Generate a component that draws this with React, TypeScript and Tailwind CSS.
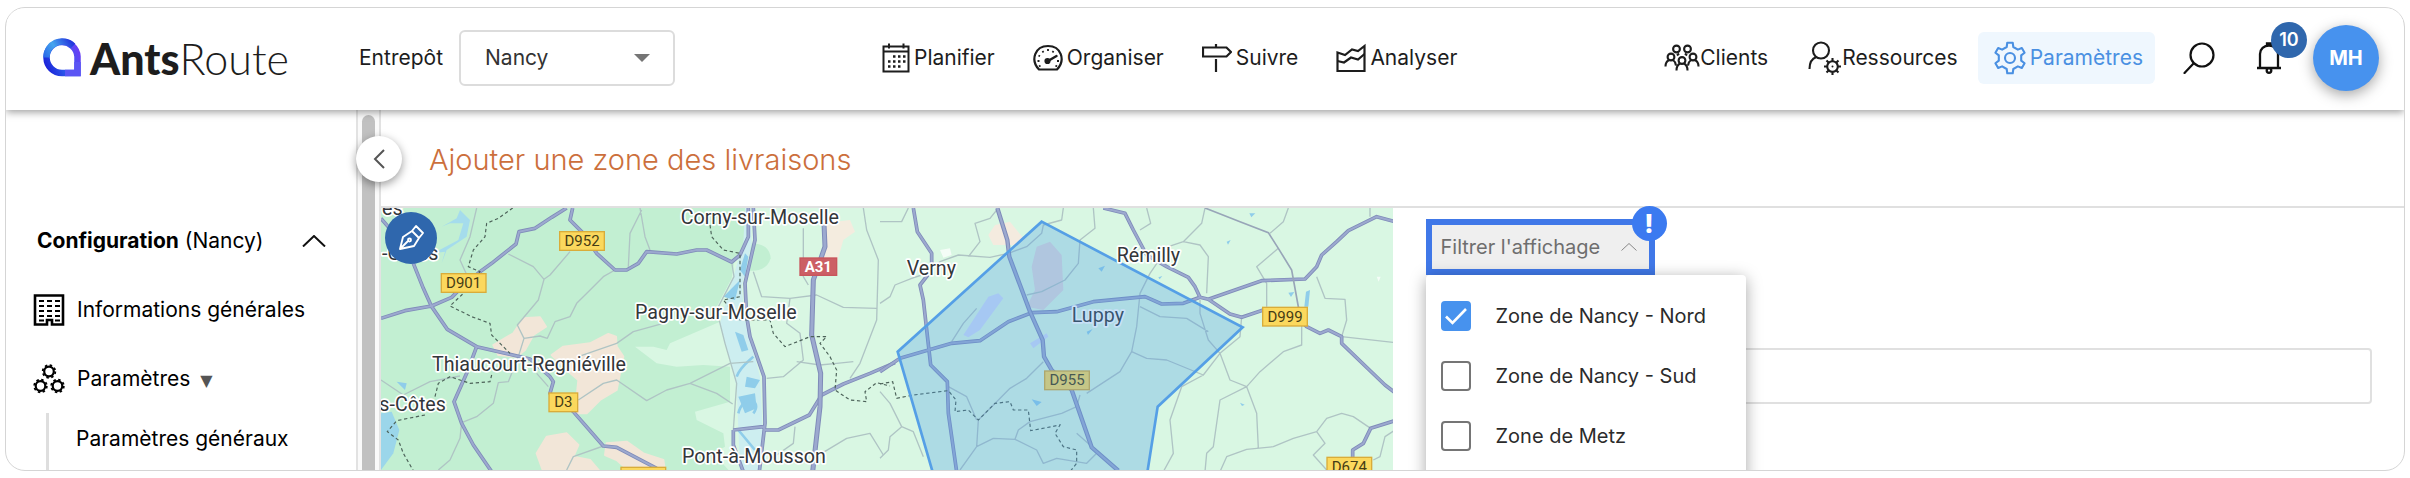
import type { ReactNode } from "react";

const gearPath = (cx: number, cy: number, outer: number, inner: number, teeth: number) => {
  const step = (Math.PI * 2) / teeth;
  const points: string[] = [];
  for (let i = 0; i < teeth; i++) {
    const a = i * step - Math.PI / 2;
    const corners = [
      [inner, -0.28],
      [outer, -0.17],
      [outer, 0.17],
      [inner, 0.28],
    ];
    corners.forEach(([r, o]) => {
      points.push(`${(cx + r * Math.cos(a + o * step)).toFixed(2)} ${(cy + r * Math.sin(a + o * step)).toFixed(2)}`);
    });
  }
  return `M${points.join("L")}Z`;
};

const Logo = () => (
  <svg className="size-10" viewBox="0 0 40 40" fill="none">
    <defs>
      <linearGradient id="logo-ring" x1="4" y1="30" x2="38" y2="14" gradientUnits="userSpaceOnUse">
        <stop offset="0" stopColor="#1b22d8" />
        <stop offset="0.5" stopColor="#2f63ee" />
        <stop offset="1" stopColor="#6a3df5" />
      </linearGradient>
      <linearGradient id="logo-top" x1="2" y1="18" x2="28" y2="2" gradientUnits="userSpaceOnUse">
        <stop offset="0" stopColor="#2a6be8" />
        <stop offset="0.45" stopColor="#45a5ee" />
        <stop offset="1" stopColor="#2338de" />
      </linearGradient>
    </defs>
    <path d="M20 35H35.500V18.500A15.500 15.500 0 1 0 20 35Z" stroke="url(#logo-ring)" strokeWidth="6.500" />
    <path d="M4.500 19.500A15.500 15.500 0 0 1 31 8" stroke="url(#logo-top)" strokeWidth="6.500" />
    <path d="M23 35H35.500V24" stroke="#5b55f4" strokeWidth="6.500" />
  </svg>
);

const CalendarIcon = () => (
  <svg className="h-[30px] w-7" viewBox="0 0 28 30" fill="none" stroke="#1d1d1d" strokeWidth="2">
    <path d="M1.500 3.500H26.500V28.500H1.500ZM1.500 8.500H26.500M7 0.500V5.500M21.500 0.500V5.500" />
    <path d="M11 13.500H24M6 18.500H24M6 23.500H19" strokeWidth="2.500" strokeDasharray="2.500 2.500" />
  </svg>
);

const GaugeIcon = () => (
  <svg className="h-7 w-[30px]" viewBox="0 0 30 28" fill="none" stroke="#1d1d1d" strokeWidth="2.200">
    <path d="M6 25.500C-3 16 2 2 15 2S33 16 24 25.500Z" strokeLinejoin="round" />
    <path d="M15 17L23.500 12" strokeWidth="2.400" strokeLinecap="round" />
    <circle cx="14.500" cy="17" r="2" fill="#1d1d1d" />
    <path d="M4.500 17H6.500M5.500 11.500L7 12.300M9.500 7L10.500 8.500M15 5V7M20.500 7L19.500 8.500M24 17H26M6 22.500L7.500 21.500M24 22.500L22.500 21.500" strokeWidth="1.800" />
  </svg>
);

const SignIcon = () => (
  <svg className="h-[30px] w-[30px]" viewBox="1 0 30 30" fill="none" stroke="#1d1d1d" strokeWidth="2.200">
    <path d="M2 4.500H25.500L30 9L25.500 13.500H2ZM15 1V4.500M15 16V29" />
  </svg>
);

const ChartIcon = () => (
  <svg className="h-[30px] w-[30px]" viewBox="0 0 30 30" fill="none" stroke="#1d1d1d" strokeWidth="2.200">
    <path d="M1.500 28H28.500V3L22 8L16 6.500L9 12L1.500 9.500Z" />
    <path d="M1.500 18L8 19.500L15 14.500L22 16.500L28.500 11" />
  </svg>
);

const ClientsIcon = () => (
  <svg className="h-7 w-9" viewBox="0 0 36 28" fill="none" stroke="#1d1d1d" strokeWidth="2.100">
    <circle cx="12.500" cy="5" r="3.400" />
    <circle cx="23.500" cy="5" r="3.400" />
    <circle cx="7" cy="13" r="3.400" />
    <circle cx="29" cy="13" r="3.400" />
    <circle cx="18" cy="16.500" r="3.400" />
    <path d="M1.500 22.500C1.500 19 3 17 5 16M12 21.500C11.500 18.500 10.500 17 9 16M34.500 22.500C34.500 19 33 17 31 16M24 21.500C24.500 18.500 25.500 17 27 16M12.500 26.500C12.500 23 14 20.500 16 19.500M23.500 26.500C23.500 23 22 20.500 20 19.500M13 11.500L15 9.500M23 11.500L21 9.500" />
  </svg>
);

const ResourcesIcon = () => (
  <svg className="h-[34px] w-[34px]" viewBox="0 0 34 34" fill="none" stroke="#1d1d1d" strokeWidth="2.100">
    <circle cx="13" cy="9.500" r="8" />
    <path d="M1.500 28C1.500 22 4 17.500 8.500 16" />
    <circle cx="24.500" cy="25.500" r="5.300" />
    <circle cx="24.500" cy="25.500" r="1" fill="#1d1d1d" stroke="none" />
    <path d="M24.500 20V17M24.500 31V34M19 25.500H16M30 25.500H33M20.600 21.600L18.500 19.500M28.400 21.600L30.500 19.500M20.600 29.400L18.500 31.500M28.400 29.400L30.500 31.500" />
  </svg>
);

const SettingsIcon = () => (
  <svg className="h-[34px] w-8" viewBox="0 0 32 34" fill="none" stroke="#4a90e2" strokeWidth="2.100" strokeLinejoin="round">
    <path d={gearPath(16, 17, 15.5, 11.5, 6)} />
    <circle cx="16" cy="17" r="5" />
  </svg>
);

const BuildingIcon = () => (
  <svg className="h-8 w-8" viewBox="0 0 32 32" fill="none" stroke="#000">
    <path d="M2 1.500H30V30.500H19V26H14V30.500H2Z" strokeWidth="2.600" />
    <path d="M6 7H27M6 12H27M6 17H27M6 22H27M6 26.500H11M22 26.500H27" strokeWidth="2.200" strokeDasharray="5 3" />
  </svg>
);

const GearsIcon = () => (
  <svg className="h-8 w-8" viewBox="0 0 32 32" fill="none" stroke="#000">
    {[
      [16, 8.5],
      [7.5, 23],
      [24.5, 23],
    ].map(([x, y]) => (
      <g key={x}>
        <circle cx={x} cy={y} r="4.800" strokeWidth="2.200" />
        <circle cx={x} cy={y} r="6.300" strokeWidth="1.800" strokeDasharray="2.470 2.470" />
      </g>
    ))}
  </svg>
);

const navItems = [
  { label: "Planifier", icon: <CalendarIcon /> },
  { label: "Organiser", icon: <GaugeIcon /> },
  { label: "Suivre", icon: <SignIcon /> },
  { label: "Analyser", icon: <ChartIcon /> },
];

const zones = [
  { id: "zone-nord", label: "Zone de Nancy - Nord", checked: true },
  { id: "zone-sud", label: "Zone de Nancy - Sud", checked: false },
  { id: "zone-metz", label: "Zone de Metz", checked: false },
];

const NavLink = ({ icon, children }: { icon: ReactNode; children: ReactNode }) => (
  <a href="#" className="flex items-center gap-1">
    {icon}
    {children}
  </a>
);

const Header = () => (
  <header className="relative z-20 flex h-[102px] shrink-0 items-center justify-between bg-white pr-[25px] pb-0.5 pl-9 text-[21px] text-[#1d1d1d] shadow-[0_2px_8px_rgba(0,0,0,0.4)]">
    <div className="flex items-center">
      <a href="#" className="flex items-center gap-2 font-[Lato,sans-serif] text-[43px] leading-none" aria-label="AntsRoute">
        <Logo />
        <span>
          <b className="font-black">Ants</b>
          <span className="font-light">Route</span>
        </span>
      </a>
      <label htmlFor="depot" className="mr-4 ml-[70px]">
        Entrepôt
      </label>
      <div className="relative">
        <select id="depot" className="h-14 w-[216px] appearance-none rounded-md border-2 border-[#dcdcdc] bg-white pl-6 text-[#333]">
          <option>Nancy</option>
        </select>
        <svg className="pointer-events-none absolute top-6 right-[25px] h-2 w-4" viewBox="0 0 16 8">
          <path d="M0 0H16L8 8Z" fill="#757575" />
        </svg>
      </div>
    </div>

    <nav className="flex items-center gap-[38px]">
      {navItems.map((item) => (
        <NavLink key={item.label} icon={item.icon}>
          {item.label}
        </NavLink>
      ))}
    </nav>

    <div className="flex items-center">
      <a href="#" className="flex items-center">
        <ClientsIcon />
        Clients
      </a>
      <a href="#" className="ml-10 flex items-center">
        <ResourcesIcon />
        Ressources
      </a>
      <a href="#" className="ml-5 flex h-[52px] items-center gap-1 rounded-md bg-[#eff7fe] pr-3 pl-4 text-[#4a90e2]">
        <SettingsIcon />
        Paramètres
      </a>
      <button type="button" aria-label="Rechercher" className="ml-7">
        <svg className="size-8" viewBox="0 0 32 32" fill="none" stroke="#111" strokeWidth="2.200" strokeLinecap="round">
          <circle cx="19" cy="13" r="11.500" />
          <path d="M10.500 21.500L1.500 31" />
        </svg>
      </button>
      <button type="button" aria-label="Notifications" className="relative ml-10">
        <svg className="h-8 w-7" viewBox="0 0 28 32" fill="none" stroke="#111" strokeWidth="2.300">
          <path d="M2 26H26M5 26V12C5 7 9 3.500 14 3.500S23 7 23 12V26M12 3.500V1.500H16V3.500" />
          <circle cx="14" cy="28.500" r="2.300" />
        </svg>
        <span className="absolute -top-[20px] left-4 flex size-9 items-center justify-center rounded-full bg-[#2f67ad] text-lg font-semibold text-white">10</span>
      </button>
      <button type="button" className="ml-[30px] size-[66px] rounded-full bg-[#4792ee] text-xl font-bold text-white shadow-[0_4px_14px_rgba(0,0,0,0.35)]">MH</button>
    </div>
  </header>
);

const Sidebar = () => (
  <aside className="relative z-10 flex w-[375px] shrink-0 text-[21px] text-black">
    <div className="flex flex-1 flex-col pt-24">
      <button type="button" className="flex h-[69px] items-center justify-between pr-[30px] pl-[31px]">
        <span>
          <b className="font-bold">Configuration</b> (Nancy)
        </span>
        <svg className="h-3 w-6" viewBox="0 0 24 12" fill="none" stroke="#111" strokeWidth="2">
          <path d="M1 11.500L12 1L23 11.500" />
        </svg>
      </button>
      <a href="#" className="flex h-[69px] items-center gap-3 pl-[27px]">
        <BuildingIcon />
        Informations générales
      </a>
      <a href="#" className="flex h-[69px] items-center gap-3 pl-[27px]">
        <GearsIcon />
        <span>
          Paramètres <span className="ml-1 font-['DejaVu_Sans'] text-base text-[#555]">▼</span>
        </span>
      </a>
      <ul className="ml-10 flex-1 border-l-[3px] border-[#dedede] pl-[27px]">
        <li className="flex h-[52px] items-center">
          <a href="#">Paramètres généraux</a>
        </li>
      </ul>
    </div>
    <div className="flex w-[25px] justify-center border-x-2 border-[#e2e2e2] bg-[#fafafa] pt-[5px]">
      <div className="w-[13px] rounded-t-full bg-[#c1c1c1]" />
    </div>
    <button type="button" aria-label="Réduire le menu" className="absolute top-[26px] -right-[21px] flex size-[46px] items-center justify-center rounded-full bg-white shadow-[0_3px_10px_rgba(0,0,0,0.4)]">
      <svg className="h-5 w-3" viewBox="0 0 12 20" fill="none" stroke="#555" strokeWidth="2">
        <path d="M11 1L2 10L11 19" />
      </svg>
    </button>
  </aside>
);

const westMajor = [
  "M33 355L105 332L185 318L245 292L262 275L330 215L365 190L438 132L447 95L495 85L545 52L590 24",
  "M130 190L160 265L185 320L232 388L320 440L480 477L540 530L550 545L540 580L610 635L700 738L740 742L860 805",
  "M320 440L290 520L252 605L275 670L310 735L365 815",
  "M608 24L600 60L640 100L680 160L735 210L770 210L805 190L830 155L920 162L980 150L1010 150L1085 186L1110 165L1135 110L1135 24",
  "M1150 24L1155 120L1125 250L1130 350L1140 410L1182 530L1185 670L1168 815",
  "M1090 690L1180 680L1185 690L1225 690L1318 645L1355 585L1420 552L1500 520L1575 488",
  "M1090 690L1090 735L1120 815",
  "M33 55L80 110",
];

const westMinor = [
  "M320 24L300 110L270 180L295 235L330 215",
  "M415 162L490 200L522 238L505 300L442 375L462 415L510 408L532 415L555 365L600 350L620 310L655 275L700 230L735 210",
  "M462 415L445 470L415 545L385 548L370 610L320 650L275 668L270 715L240 780L205 810",
  "M600 155L540 225L522 238M810 24L825 110L840 150M815 30L780 100L775 200",
  "M33 540L100 585L180 545L270 528M500 520L535 560",
  "M625 600L700 550L740 540L830 602L890 570L960 550L1040 580L1088 612M960 550L1080 490L1150 485",
  "M625 470L740 430L790 395L880 370",
  "M590 810L610 770L700 738M1085 186L1092 230L1040 330L1065 430L1100 550L1090 690",
  "M1150 215L1175 290L1260 295L1340 285L1420 322L1520 325M1260 295L1250 370L1290 400L1300 480L1240 530L1190 535",
  "M1480 24L1490 90L1525 180L1520 360L1470 490L1440 535M1280 485L1350 495L1400 490L1450 485",
  "M1300 85L1300 230L1315 255M1275 680L1270 730L1220 765M1355 760L1430 715L1500 700L1540 765",
];

const eastMajor = [
  "M100 24L112 95L155 160L155 210L120 255L130 300L152 495L202 545L205 640L230 815",
  "M0 515L60 475L215 430L300 422L385 365L455 338L530 335L640 305L795 290L845 312L910 310L960 292L985 298L1145 242L1275 237L1310 200L1325 165L1370 125L1405 92L1490 50L1545 65",
  "M670 24L735 40L760 90L800 165L860 200L925 232L945 260L960 292M985 298L1050 342L1085 352L1150 330L1240 340L1280 380L1320 400L1345 390L1385 410L1385 430L1515 555L1545 578",
  "M1545 662L1472 685L1450 730L1418 750L1418 780",
];

const eastMinor = [
  "M0 65L65 65L85 24M550 24L545 60L490 75L485 100L440 140L385 160L330 172L235 165L180 185L125 225L95 235L45 255L30 290L0 310",
  "M355 24L330 55L285 70L300 125L265 170M640 24L645 85L600 120L595 190L555 240L485 275L440 285",
  "M975 24L965 70L910 125L865 140L810 220L780 280L770 380L755 455L720 515L620 580",
  "M800 24L812 70L780 90M910 125L960 135L985 170L980 280",
  "M1225 24L1210 65L1170 100M1195 145L1130 200L1160 250L1160 320",
  "M780 320L840 350L920 355L985 395M755 455L800 475L860 480L970 525L1020 460L1080 410L1085 350",
  "M1020 460L1050 540L1100 560M960 300L960 340L985 420L1020 460",
  "M1265 340L1265 435L1210 455L1140 515L1100 560L1020 600L1000 740L980 760L975 815",
  "M1020 815L1040 770L1100 748L1180 740L1240 715L1310 695L1340 655L1385 640L1420 650L1472 685",
  "M1310 230L1335 295L1395 298L1400 360L1385 410L1545 428M1470 24L1470 50",
  "M490 485L440 535L390 565L350 605L295 660L290 740L240 810",
  "M205 560L260 590L290 660M290 740L340 715L405 718L415 690L450 665L545 640L590 620L600 585M405 718L470 750L490 790L530 775L620 790L650 760L630 735L590 700",
  "M0 575L30 610L65 680L100 695L130 770M65 680L30 710L25 750L0 775",
  "M970 525L905 560L870 660L880 760L850 815M1100 560L1130 640L1135 745M1310 695L1335 730L1300 765L1340 810M1545 690L1515 710L1500 770L1480 780",
  "M215 425L250 370L290 325",
];

const eastThin = ["M975 24L1080 65L1165 98L1195 145L1235 210L1255 320L1265 345"];

const Roads = ({ major, minor }: { major: string[]; minor: string[] }) => (
  <g fill="none" strokeLinejoin="round">
    <path d={minor.join("")} stroke="#afc4c4" strokeWidth="4" />
    <path d={major.join("")} stroke="#7f8bb9" strokeWidth="11" />
    <path d={major.join("")} stroke="#9ca9cf" strokeWidth="6" />
  </g>
);

const RoadSign = ({ x, y, name, highway }: { x: number; y: number; name: string; highway?: boolean }) => {
  const width = name.length > 3 ? 134 : name.length === 3 ? 110 : 86;
  return (
    <g>
      <rect x={x - width / 2} y={y - 28} width={width} height={highway ? 52 : 56} fill={highway ? "#cc5f65" : "#fbd85d"} stroke={highway ? "#c8555c" : "#d9ac3a"} strokeWidth="4" />
      <text x={x} y={y + 15} textAnchor="middle" fontSize="45" fontWeight={highway ? 700 : 400} fill={highway ? "#fff" : "#463c14"}>
        {name}
      </text>
    </g>
  );
};

const Place = ({ x, y, children }: { x: number; y: number; children: string }) => (
  <text x={x} y={y} fontSize="59" fill="#33363a" stroke="#fff" strokeWidth="10" strokeLinejoin="round" paintOrder="stroke">
    {children}
  </text>
);

const ZoneMap = () => (
  <svg className="size-full font-[Roboto,sans-serif]" viewBox="0 0 3036 786" preserveAspectRatio="xMinYMin slice">
    <rect width="3036" height="786" fill="#d9f7e3" />
    <g transform="translate(-33 -24)">
      <path d="M33 24H1140L1130 120L1092 190L1085 235L1040 320L1050 365L900 430L890 450L850 440L795 440L860 490L920 500L1000 495L1080 500L1080 605L975 635L980 660L1060 700L1065 740L1030 760L1080 815H33Z" fill="#c2efd2" />
      <path d="M1140 130Q1200 130 1202 175Q1190 215 1140 212Z" fill="#c2efd2" />
      <path d="M370 435L430 400L460 355L510 352L528 380L490 405L465 450L440 470L385 465ZM545 465L580 440L660 430L715 402L738 410L740 440L760 470L740 570L690 600L650 640L615 640L625 540L590 510ZM500 760L530 710L590 700L625 735L610 770L660 780L690 815H520ZM710 730L770 725L820 760L880 780L885 815H780L740 780L705 765Z" fill="#f2e6d8" stroke="#f2e6d8" strokeWidth="6" strokeLinejoin="round" />
      <path d="M1360 70L1440 60L1455 95L1420 120L1400 190L1360 200Z" fill="#f4ecdf" />
      <path d="M1140 24L1145 130L1115 260L1125 360L1170 530L1178 690L1165 815H1110L1100 560L1050 370L1090 230L1120 130L1125 24Z" fill="#cdeef0" />
      <path d="M33 640L65 635L88 690L70 760L33 810Z" fill="#9bd6ea" />
      <path d="M270 30L300 60L290 110L230 150L215 190L225 155L190 160L265 120L280 70L240 70L215 80L260 55Z" fill="#a5dcec" />
      <path d="M1095 395l25 10l15 45l-20 5zM1130 530l40 10l-15 25l-30-5zM1105 590l50 -10l5 45l-35 15zM80 545l30 5l-5 20zM1060 290l50-50l-15 60zM1110 210l15-50l10 10l-10 60z" fill="#8fcdea" />
      <path d="M1105 640C1120 580 1180 600 1150 640M1100 530C1110 500 1140 480 1150 470M1105 690L1155 750" fill="none" stroke="#8fcdea" strokeWidth="8" />
      <Roads major={westMajor} minor={westMinor} />
      <path d="M1360 24L1365 140L1330 240L1325 405L1352 520L1350 620L1328 815" fill="none" stroke="#7f8bb9" strokeWidth="15" />
      <path d="M1360 24L1365 140L1330 240L1325 405L1352 520L1350 620L1328 815" fill="none" stroke="#9ca9cf" strokeWidth="9" />
      <g fill="none" stroke="#4c6259" strokeWidth="3.500" strokeDasharray="10 8">
        <path d="M428 24L385 55L350 70L345 110L310 150L295 200L330 215L275 285L240 318L305 350L360 370L365 405L420 460" />
        <path d="M195 590L205 550L240 530L300 550L360 545L365 525M165 645L80 662L52 695L85 720L100 760L130 812" />
        <path d="M1020 75L1025 110L1060 150L1110 160L1110 290L1060 300L1110 360L1200 360L1210 400L1245 440L1320 410L1370 410L1350 430L1380 470L1400 510L1395 570L1440 600L1490 605L1485 575L1520 548L1560 558" />
      </g>
    </g>
    <g transform="translate(1497 -24)">
      <path d="M345 75L390 65L430 115L415 135L340 135L325 105Z" fill="#f4ebdf" />
      <path d="M470 140L510 125L545 165L550 270L490 330L440 320L465 270L455 200Z" fill="#ddd8dc" />
      <path d="M250 405L325 290L355 280L370 295L300 390L265 412ZM450 430L500 400L505 410L460 445Z" fill="#cfdcf8" />
      <path d="M1278 275l12-5l-5 50h-12zM1225 278l18-2l-10 15zM1108 40l18 0l-12 12zM1040 125l12-5l-8 14zM655 205l20-8l-10 18zM620 395l18-8l-14 18zM455 598l30 8l-15 12zM1080 608l14 6l-8 4zM835 232l12-4l-8 10z" fill="#8fcdea" />
      <path d="M180 150l30-5l5 20l-25 8zM1490 230l12 0l-6 15z" fill="#fff" opacity="0.700" />
      <Roads major={eastMajor} minor={eastMinor} />
      <path d={eastThin.join("")} fill="none" stroke="#98a5b8" strokeWidth="5" />
      <path d="M352 24L382 120L388 170L450 335L488 420L492 470L515 510L575 570L635 742L715 812" fill="none" stroke="#7f8bb9" strokeWidth="13" />
      <path d="M352 24L382 120L388 170L450 335L488 420L492 470L515 510L575 570L635 742L715 812" fill="none" stroke="#9ca9cf" strokeWidth="7" />
      <path d="M0 552L38 545L50 595L100 585L205 572L228 600L225 635L265 630L295 660L345 610L390 605L400 630L445 630L452 692L540 675L525 700L550 740L590 750L590 790L570 815" fill="none" stroke="#4c6259" strokeWidth="3.500" strokeDasharray="10 8" />
      <Place x={575} y={367}>Luppy</Place>
      <RoadSign x={561} y={541} name="D955" />
      <path d="M485 65L1088 382L833 620L800 830H162L53 455Z" fill="#4a9be8" fillOpacity="0.300" stroke="#559fe6" strokeWidth="8" />
      <Place x={80} y={226}>Verny</Place>
      <Place x={710} y={187}>Rémilly</Place>
      <RoadSign x={1215} y={350} name="D999" />
      <RoadSign x={1408} y={800} name="D674" />
    </g>
    <g transform="translate(-33 -24)">
      <Place x={36} y={45}>es</Place>
      <Place x={36} y={180}>-Côtes</Place>
      <Place x={932} y={71}>Corny-sur-Moselle</Place>
      <Place x={795} y={356}>Pagny-sur-Moselle</Place>
      <Place x={186} y={513}>Thiaucourt-Regniéville</Place>
      <Place x={28} y={632}>s-Côtes</Place>
      <Place x={936} y={790}>Pont-à-Mousson</Place>
      <RoadSign x={636} y={123} name="D952" />
      <RoadSign x={281} y={249} name="D901" />
      <RoadSign x={580} y={607} name="D3" />
      <RoadSign x={820} y={830} name="D907" />
      <RoadSign x={1345} y={202} name="A31" highway />
    </g>
  </svg>
);

const FilterPanel = () => (
  <section className="flex-1 pt-[11px] pr-8 pl-[33px]">
    <div className="relative w-fit">
      <button type="button" className="flex h-14 w-[229px] items-center justify-between border-[6px] border-[#4078e8] bg-[#efefef] pr-3 pl-[9px] text-xl whitespace-nowrap text-[#6e6e6e]">
        Filtrer l'affichage
        <svg className="h-2 w-4" viewBox="0 0 16 8" fill="none" stroke="#888">
          <path d="M0.500 7.500L8 0.500L15.500 7.500" />
        </svg>
      </button>
      <span className="absolute -top-[13px] -right-3 z-10 flex size-[35px] items-center justify-center rounded-full bg-[#3b7af0] text-[26px] leading-none font-extrabold text-white">!</span>
      <div className="absolute top-full left-0 flex w-80 flex-col gap-[30px] rounded bg-white px-[15px] pt-[26px] pb-16 shadow-[0_3px_16px_rgba(0,0,0,0.35)]">
        {zones.map((zone) => (
          <div key={zone.id} className="flex items-center gap-[25px]">
            <span className="relative size-[30px]">
              <input id={zone.id} type="checkbox" defaultChecked={zone.checked} className="peer block size-[30px] appearance-none rounded border-2 border-[#757575] bg-white checked:border-[#4792ee] checked:bg-[#4792ee]" />
              <svg className="pointer-events-none absolute inset-0 hidden peer-checked:block" viewBox="0 0 30 30" fill="none" stroke="#fff" strokeWidth="2.600">
                <path d="M5 15.500L11.500 22L25 8" />
              </svg>
            </span>
            <label htmlFor={zone.id} className="text-xl leading-[30px] text-[#2b2b2b]">
              {zone.label}
            </label>
          </div>
        ))}
      </div>
    </div>
    <input type="text" aria-label="Nom de la zone" className="mt-[73px] h-14 w-full rounded border-2 border-[#e0e0e0]" />
  </section>
);

const App = () => {
  return (
    <div className="h-screen bg-white px-[5px] py-[7px] font-[Inter,sans-serif]">
      <div className="flex h-full flex-col overflow-hidden rounded-[20px] border border-[#d5d5d5]">
        <Header />
        <div className="flex min-h-0 flex-1">
          <Sidebar />
          <main className="flex min-w-0 flex-1 flex-col">
            <h1 className="flex h-[98px] shrink-0 items-center border-b-2 border-[#e0e0e0] pt-1 pl-12 text-[29px] font-light text-[#cc6f3c]">Ajouter une zone des livraisons</h1>
            <div className="flex min-h-0 flex-1">
              <div className="relative w-1/2 overflow-hidden">
                <ZoneMap />
                <button type="button" aria-label="Dessiner une zone" className="absolute top-1 left-1 flex size-[52px] items-center justify-center rounded-full bg-[#2f67ad]">
                  <svg className="size-7" viewBox="0 0 28 28" fill="none" stroke="#fff" strokeWidth="1.900" strokeLinejoin="round">
                    <path d="M3 25L6 13L15 7L22 14L17 22ZM15 7L19 2L26 9L22 14M3 25L11 17" />
                    <circle cx="12.500" cy="16" r="1.500" />
                  </svg>
                </button>
              </div>
              <FilterPanel />
            </div>
          </main>
        </div>
      </div>
    </div>
  );
};

export default App;
